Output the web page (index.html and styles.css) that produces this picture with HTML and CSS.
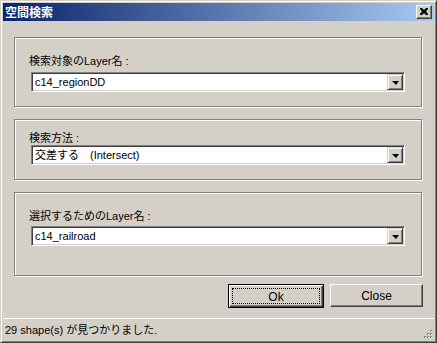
FILE: index.html
```html
<!DOCTYPE html>
<html lang="ja">
<head>
<meta charset="utf-8">
<title>空間検索</title>
<link rel="stylesheet" href="styles.css">
</head>
<body>
<div class="window">
  <div class="titlebar">
    <span class="title">空間検索</span>
    <span class="close-btn">
      <svg width="8" height="7" viewBox="0 0 8 7"><path d="M0 0h2l2 2 2-2h2v1L6 3.5 8 6v1H6L4 5 2 7H0V6l2-2.5L0 1z" fill="#000"/></svg>
    </span>
  </div>
  <div class="client">
    <div class="main">
      <div class="group g1">
        <div class="label">検索対象のLayer名 :</div>
        <div class="combo"><span class="combo-text">c14_regionDD</span><span class="drop"><span class="arrow"></span></span></div>
      </div>
      <div class="group g2">
        <div class="label">検索方法 :</div>
        <div class="combo"><span class="combo-text">交差する　(Intersect)</span><span class="drop"><span class="arrow"></span></span></div>
      </div>
      <div class="group g3">
        <div class="label">選択するためのLayer名 :</div>
        <div class="combo"><span class="combo-text">c14_railroad</span><span class="drop"><span class="arrow"></span></span></div>
      </div>
      <div class="buttons">
        <div class="btn default"><span class="focus">Ok</span></div>
        <div class="btn close">Close</div>
      </div>
    </div>
    <div class="status">
      <span class="status-text">29 shape(s) が見つかりました.</span>
      <svg class="grip" width="12" height="12" viewBox="0 0 12 12">
        <rect x="8" y="2" width="2" height="2" fill="#808080"/><rect x="9" y="3" width="1" height="1" fill="#fff"/>
        <rect x="5" y="5" width="2" height="2" fill="#808080"/><rect x="6" y="6" width="1" height="1" fill="#fff"/>
        <rect x="8" y="5" width="2" height="2" fill="#808080"/><rect x="9" y="6" width="1" height="1" fill="#fff"/>
        <rect x="2" y="8" width="2" height="2" fill="#808080"/><rect x="3" y="9" width="1" height="1" fill="#fff"/>
        <rect x="5" y="8" width="2" height="2" fill="#808080"/><rect x="6" y="9" width="1" height="1" fill="#fff"/>
        <rect x="8" y="8" width="2" height="2" fill="#808080"/><rect x="9" y="9" width="1" height="1" fill="#fff"/>
      </svg>
    </div>
  </div>
</div>
</body>
</html>
```
FILE: styles.css
```css
* { box-sizing: border-box; }
html, body { margin: 0; padding: 0; }
body {
  font-family: "Liberation Sans", "Noto Sans CJK JP", sans-serif;
  font-size: 11px;
  color: #000;
  background: #d4d0c8;
}
.window {
  width: 437px;
  height: 343px;
  background: #d4d0c8;
  border: 1px solid;
  border-color: #d4d0c8 #404040 #404040 #d4d0c8;
  box-shadow: inset 1px 1px 0 #fff, inset -1px -1px 0 #808080;
  padding: 2px;
  display: flex;
  flex-direction: column;
}
.titlebar {
  height: 18px;
  flex: none;
  background: linear-gradient(to right, #0a246a, #a6caf0);
  display: flex;
  align-items: center;
  padding: 0 2px 0 2px;
}
.title {
  color: #fff;
  font-family: "Noto Sans CJK JP", sans-serif;
  font-weight: bold;
  font-size: 12px;
  line-height: 14px;
}
.close-btn {
  margin-left: auto;
  width: 16px;
  height: 14px;
  background: #d4d0c8;
  border: 1px solid;
  border-color: #fff #404040 #404040 #fff;
  box-shadow: inset -1px -1px 0 #808080;
  display: flex;
  align-items: center;
  justify-content: center;
  padding-bottom: 1px;
}
.close-btn svg { display: block; }
.client {
  flex: 1;
  display: flex;
  flex-direction: column;
}
.main {
  flex: 1;
  padding: 16px 12px 0 11px;
  display: flex;
  flex-direction: column;
}
.group {
  border: 1px solid #808080;
  box-shadow: inset 1px 1px 0 #fff, 1px 1px 0 #fff;
  padding: 0 16px;
  display: flex;
  flex-direction: column;
}
.g1 { height: 70px; padding-top: 17px; }
.g2 { height: 61px; padding-top: 12px; margin-top: 12px; }
.g3 { height: 84px; padding-top: 17px; margin-top: 12px; }
.label {
  height: 13px;
  line-height: 13px;
  margin-left: -2px;
  white-space: nowrap;
}
.g1 .label { margin-bottom: 4px; }
.g2 .label { margin-bottom: 0; }
.g3 .label { margin-bottom: 3px; }
.combo {
  height: 20px;
  background: #fff;
  border: 1px solid;
  border-color: #808080 #fff #fff #808080;
  box-shadow: inset 1px 1px 0 #404040, inset -1px -1px 0 #d4d0c8;
  padding: 1px;
  display: flex;
  align-items: stretch;
}
.combo-text {
  flex: 1;
  line-height: 16px;
  padding-left: 2px;
  white-space: nowrap;
}
.drop {
  width: 16px;
  background: #d4d0c8;
  border: 1px solid;
  border-color: #d4d0c8 #404040 #404040 #d4d0c8;
  box-shadow: inset 1px 1px 0 #fff, inset -1px -1px 0 #808080;
  display: flex;
  align-items: center;
  justify-content: center;
}
.arrow {
  width: 0;
  height: 0;
  border-left: 4px solid transparent;
  border-right: 3px solid transparent;
  border-top: 4px solid #000;
  margin-top: 1px;
}
.buttons {
  display: flex;
  justify-content: flex-end;
  gap: 6px;
  margin-top: 8px;
  margin-right: -1px;
}
.btn {
  height: 24px;
  display: flex;
  align-items: center;
  justify-content: center;
  font-size: 12px;
  background: #d4d0c8;
}
.btn.default {
  width: 96px;
  border: 1px solid #000;
  box-shadow: inset 1px 1px 0 #fff, inset -1px -1px 0 #404040, inset -2px -2px 0 #808080;
  padding: 3px;
}
.btn.default .focus {
  flex: 1;
  align-self: stretch;
  border: 1px dotted #000;
  display: flex;
  align-items: center;
  justify-content: center;
  padding-top: 1px;
}
.btn.close {
  width: 93px;
  height: 23px;
  border: 1px solid;
  border-color: #fff #404040 #404040 #fff;
  box-shadow: inset -1px -1px 0 #808080;
}
.status {
  height: 22px;
  flex: none;
  border-top: 1px solid #fff;
  display: flex;
  align-items: center;
  padding-left: 2px;
}
.status-text {
  line-height: 14px;
  white-space: nowrap;
}
.grip {
  margin-left: auto;
  align-self: flex-end;
  display: block;
}
```
